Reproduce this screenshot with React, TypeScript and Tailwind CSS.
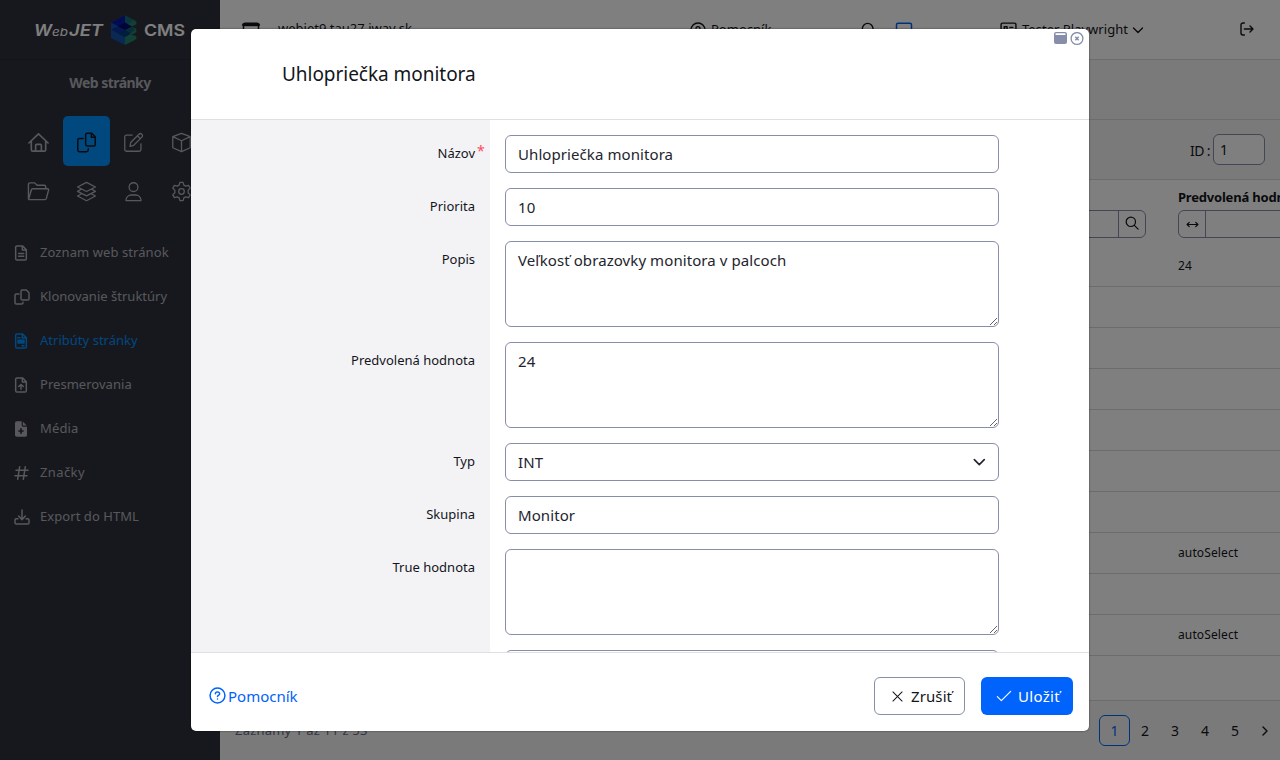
import React from "react";

type IconProps = { className?: string; sw?: number; size?: number; children?: React.ReactNode };

function Icon({ className = "", sw = 1.5, size = 24, children }: IconProps) {
  return (
    <svg
      width={size}
      height={size}
      viewBox="0 0 24 24"
      fill="none"
      stroke="currentColor"
      strokeWidth={sw}
      strokeLinecap="round"
      strokeLinejoin="round"
      className={"shrink-0 " + className}
    >
      {children}
    </svg>
  );
}

const home = (
  <>
    <path d="M2 12.500 12 3l10 9.500M4.500 11v8.500a1.500 1.500 0 0 0 1.500 1.500h12a1.500 1.500 0 0 0 1.500-1.500V11" />
    <path d="M9 21v-6a1 1 0 0 1 1-1h4a1 1 0 0 1 1 1v6" />
  </>
);
const copy = (
  <>
    <path d="M13 1.500h5l4 4v9a1.500 1.500 0 0 1-1.500 1.500h-7.500a2 2 0 0 1-2-2V3.500a2 2 0 0 1 2-2zM17.500 1.500V6h4.500" />
    <path d="M8 7.500H4a2 2 0 0 0-2 2v11a2 2 0 0 0 2 2h8a2 2 0 0 0 2-2V19" />
  </>
);
const copySmall = (
  <>
    <path d="M12.500 1.500h6l4 4v9a2 2 0 0 1-2 2h-8a2 2 0 0 1-2-2v-11a2 2 0 0 1 2-2z" />
    <path d="M7.500 7.500h-4a2 2 0 0 0-2 2v11a2 2 0 0 0 2 2h8a2 2 0 0 0 2-2V20" />
  </>
);
const edit = (
  <>
    <path d="M10.500 3.500H4a2 2 0 0 0-2 2V20a2 2 0 0 0 2 2h14.500a2 2 0 0 0 2-2V13.500" />
    <path d="m8 16.500.8-4.500L18.200 2.500a2.300 2.300 0 0 1 3.300 3.300l-9.200 9.400zM16.500 4.300l3.300 3.300" />
  </>
);
const cube = <path d="m12 1.500 10 3.800v12.700L12 22.500 2 18V5.300zM2 5.300 12 10l10-4.700M12 10v12.500" />;
const folder = (
  <>
    <path d="M1.500 19.500V4.500A1.500 1.500 0 0 1 3 3h5l2.500 2.500H18A1.500 1.500 0 0 1 19.500 7v2" />
    <path d="M1.700 19.800 4.500 10.500A1.500 1.500 0 0 1 6 9.200h15.500a1 1 0 0 1 1 1.300l-2.300 8.700a1.800 1.800 0 0 1-1.700 1.300H2.200" />
  </>
);
const stack = (
  <>
    <path d="M12 1.500 1.800 6.800 12 12l10.200-5.200z" />
    <path d="m6 9.500-4.200 2.300L12 17l10.200-5.200L18 9.500" />
    <path d="m6 14.800-4.200 2.300L12 22.500l10.200-5.400-4.200-2.300" />
  </>
);
const user = (
  <>
    <circle cx="12" cy="7" r="5" />
    <path d="M3.500 22.500v-1a6 6 0 0 1 6-5.500h5a6 6 0 0 1 6 5.500v1z" />
  </>
);
const gear = (
  <>
    <path d="M10.200 1.500h3.600l.9 3.200 2.200 1.200 3.200-.9 1.900 3.200-2.400 2.400v2.800l2.400 2.400-1.900 3.200-3.200-.9-2.200 1.200-.9 3.200h-3.600l-.9-3.200-2.200-1.200-3.200.9L2 15.800l2.400-2.400v-2.800L2 8.200 3.900 5l3.200.9 2.200-1.200z" />
    <circle cx="12" cy="12" r="3.200" />
  </>
);
const fileOutline = (
  <path d="M4.500 1.500h8.500l5.500 5.500v13.500a2 2 0 0 1-2 2h-12a2 2 0 0 1-2-2v-17a2 2 0 0 1 2-2zM12.500 2v5.500h5.500" />
);
const fileText = (
  <>
    {fileOutline}
    <path d="M7 12.800h7.500M7 17h7.500" />
  </>
);
const fileFilled = (
  <>
    {fileOutline}
    <path d="M5.500 7h3.500" />
    <rect x="6" y="11" width="9" height="4" fill="currentColor" />
    <path d="M12 19h3" />
  </>
);
const fileUp = (
  <>
    {fileOutline}
    <path d="M10.500 18.500V11.500M7 14.200l3.500-3 3.500 3" />
  </>
);
const filePlus = (
  <>
    <path
      fill="currentColor"
      stroke="none"
      fillRule="evenodd"
      d="M4 .5h7.500v6a2 2 0 0 0 2 2h6v12.500a2.500 2.500 0 0 1-2.500 2.500H4A2.500 2.500 0 0 1 1.500 21V3A2.500 2.500 0 0 1 4 .5zM9.200 11v2.700H6.500v2.600h2.700V19h2.600v-2.700h2.700v-2.600h-2.700V11z"
    />
    <path fill="currentColor" stroke="none" d="M13.200 .8 19 6.800h-5.800z" />
  </>
);
const hash = <path d="M3 8h18M1.500 16h18M8.500 2.500l-3 19M17 2.500l-3 19" />;
const download = (
  <>
    <path d="M12 1.500v14M7 10.500l5 5.500 5-5.500" />
    <path d="M6 14.500H3.500a2 2 0 0 0-2 2v4a2 2 0 0 0 2 2h17a2 2 0 0 0 2-2v-4a2 2 0 0 0-2-2H18" />
  </>
);
const help = (
  <>
    <circle cx="12" cy="12" r="10.500" />
    <path d="M9 9.500a3 2.500 0 1 1 4.700 2c-1.100.6-1.700.9-1.700 2M12 17v.1" />
  </>
);
const search = (
  <>
    <circle cx="10" cy="10" r="8" />
    <path d="m16 16 6.500 6.500" />
  </>
);

const topIcons = [home, copy, edit, cube, folder, stack, user, gear];

const menu = [
  { label: "Zoznam web stránok", icon: fileText, track: "tracking-[0.08px]" },
  { label: "Klonovanie štruktúry", icon: copySmall, track: "tracking-[0.01px]" },
  { label: "Atribúty stránky", icon: fileFilled, active: true, track: "tracking-[0.02px]" },
  { label: "Presmerovania", icon: fileUp, track: "tracking-[0.03px]" },
  { label: "Média", icon: filePlus, track: "tracking-[0.13px]" },
  { label: "Značky", icon: hash, track: "tracking-[0.4px]" },
  { label: "Export do HTML", icon: download, track: "tracking-[0.06px]" },
];

function Logo() {
  return (
    <svg width="150" height="32" viewBox="0 0 150 32" className="shrink-0">
      <g fill="#fff" fontFamily="Inter, sans-serif" fontWeight="600">
        <text x="-1" y="21.500" fontSize="16.500" fontStyle="italic" textLength="18" lengthAdjust="spacingAndGlyphs">W</text>
        <text x="17" y="21.500" fontSize="11" fontStyle="italic" textLength="16" lengthAdjust="spacingAndGlyphs" fontWeight="400">eb</text>
        <text x="34" y="21.500" fontSize="16.500" fontStyle="italic" textLength="34" lengthAdjust="spacingAndGlyphs">JET</text>
        <text x="109" y="21.500" fontSize="16.500" textLength="41" lengthAdjust="spacingAndGlyphs">CMS</text>
      </g>
      <path d="M76 8.500 90 1.500V31l-14-7z" fill="#1250a4" />
      <path d="m90 1.500 10 5q1.500 1 1.500 2.500t-1.500 2L96 13l4 1q1.500 1 1.500 2.500T100 19l-4 2 4 .5q1.500.8 1.500 2T100 26l-10 5z" fill="#23806a" />
      <path d="M76 8.500 90 1.500v14z" fill="#0618a4" />
      <path d="m90 1.500 9 4.500-9 6z" fill="#176878" />
      <path d="m90 8.500 7 4-7 4-7-4z" fill="#000a70" />
      <path d="M76 15.500 83 12.500l7 3.500v7z" fill="#0a30a0" />
      <path d="m90 16 7-3 3 3-10 7z" fill="#105a70" />
      <path d="m90 16 6 3.500-6 3.500-7-3.500z" fill="#063a78" />
    </svg>
  );
}

function Sidebar() {
  return (
    <aside className="flex h-full w-[220px] shrink-0 flex-col bg-[#2f313b] text-[#b0b1b8]">
      <div className="flex h-[60px] shrink-0 items-center border-b border-[#272832] pl-[35px]">
        <Logo />
      </div>
      <div className="flex h-[46px] items-center justify-center pb-[2px] text-[14px] font-bold tracking-[-0.55px]">Web stránky</div>
      <div className="mt-[10px] grid w-[192px] grid-cols-[47px_47px_47px_47px] gap-x-[0.6px] pl-[15px]">
        {topIcons.map((icon, i) => (
          <div
            key={i}
            className={
              "flex h-[50px] items-center justify-center rounded-[5px] " +
              (i === 1 ? "bg-[#0090fb] text-[#15161c] " : "") +
              (i > 3 ? "" : "pt-[2px]")
            }
          >
            <Icon size={i === 0 || i === 4 ? 23 : 21} sw={i === 0 || i === 1 ? 1.7 : 1.45}>{icon}</Icon>
          </div>
        ))}
      </div>
      <nav className="mt-[14px] flex flex-col">
        {menu.map((m) => (
          <div
            key={m.label}
            className={"flex h-[44px] items-center gap-[10px] pt-[2px] pl-[14px] text-[13px] " + m.track + (m.active ? " text-[#0090fb]" : "")}
          >
            <Icon size={16} sw={2.2}>{m.icon}</Icon>
            <span>{m.label}</span>
          </div>
        ))}
      </nav>
    </aside>
  );
}

const rows = ["24", "", "", "", "", "", "", "autoSelect", "", "autoSelect", ""];

function Main() {
  return (
    <main className="flex h-full min-w-0 flex-1 flex-col overflow-hidden bg-white text-[#13151b]">
      <header className="flex h-[60px] shrink-0 items-center border-b border-[#d8d8dc] text-[13px]">
        <Icon size={18} sw={2} className="ml-[22px]">
          <rect x="2" y="3" width="20" height="18" rx="2" />
          <path d="M2 5h20" strokeWidth="4" />
        </Icon>
        <span className="-mt-[2px] ml-[18px] w-[413px] text-[13px]">webjet9.tau27.iway.sk</span>
        <Icon size={16} sw={2.1} className="-ml-px">{help}</Icon>
        <span className="ml-[5px] w-[150px]">Pomocník</span>
        <Icon size={16} sw={2.1}>{search}</Icon>
        <Icon size={18} sw={2} className="ml-[18px] text-[#0063fb]">
          <rect x="2" y="3" width="20" height="14" rx="2" />
          <path d="M8 21h8" />
        </Icon>
        <Icon size={17} sw={2} className="ml-[87px]">
          <rect x="1.500" y="3" width="21" height="18" rx="2" />
          <rect x="6" y="8" width="4" height="4" />
          <path d="M14 9h4M14 13h4M6 16h5" />
        </Icon>
        <span className="ml-[5px] tracking-[0.03px]">Tester Playwright</span>
        <Icon size={12} sw={2.8} className="ml-[4px]"><path d="m3 8 9 9 9-9" /></Icon>
        <Icon size={16} sw={2.1} className="mr-[25px] ml-auto -mt-[2px]">
          <path d="M8 3H6a3 3 0 0 0-3 3v12a3 3 0 0 0 3 3h2M8 12h13M16.500 7.500 21 12l-4.500 4.500" />
        </Icon>
      </header>
      <div className="h-[60px] shrink-0 border-b border-[#d8d8dc] bg-[#f5f5f6]" />
      <div className="flex h-[60px] shrink-0 items-center justify-end gap-[3px] border-b border-[#d8d8dc] bg-[#f5f5f6] pr-[15px] text-[14px]">
        <span className="pt-px tracking-[-0.6px]">ID :</span>
        <div className="flex h-[31px] w-[52px] items-center rounded-[6px] border border-[#868eaa] bg-white pl-[6px]">1</div>
      </div>
      <div className="flex h-[66px] shrink-0 justify-end">
        <div className="mt-[30px] mr-[32px] flex h-[28px] w-[200px] rounded-[6px] border border-[#868eaa]">
          <div className="flex-1" />
          <div className="flex w-[27px] items-center justify-center border-l border-[#868eaa] pb-[2px]">
            <Icon size={14} sw={2.1}>{search}</Icon>
          </div>
        </div>
        <div className="w-[102px] overflow-hidden pt-[9px]">
          <div className="h-[21px] text-[13px] leading-[17px] font-bold whitespace-nowrap tracking-[-0.2px]">Predvolená hodnota</div>
          <div className="flex h-[28px] w-[200px] rounded-[6px] border border-[#868eaa]">
            <div className="flex w-[27px] items-center justify-center border-r border-[#868eaa]">
              <Icon size={13} sw={2.2}><path d="M2 12h20M6 8l-4 4 4 4M18 8l4 4-4 4" /></Icon>
            </div>
          </div>
        </div>
      </div>
      <div className="flex shrink-0 flex-col">
        {rows.map((r, i) => (
          <div
            key={i}
            className={"flex items-start border-b border-[#d8d8dc] pt-[10px] pl-[958px] text-[12px] leading-[19px] tracking-[0.12px] " + (i === 10 ? "h-[45px]" : "h-[41px]")}
          >
            {r}
          </div>
        ))}
      </div>
      <footer className="flex flex-1 items-center bg-[#f5f5f6] pl-[15px] text-[14px]">
        <span className="text-[13px] tracking-[0.2px] text-[#666d85]">Záznamy 1 až 11 z 53</span>
        <div className="mr-0 ml-auto flex items-center">
          <div className="flex h-[31px] w-[31px] items-center justify-center rounded-[6px] border border-[#0063fb] text-[#0063fb]">1</div>
          {["2", "3", "4", "5"].map((n) => (
            <div key={n} className="flex w-[30px] justify-center">{n}</div>
          ))}
          <div className="flex w-[30px] justify-center">
            <Icon size={12} sw={2.8}><path d="m8 4 8 8-8 8" /></Icon>
          </div>
        </div>
      </footer>
    </main>
  );
}

type Field = { label: string; value: string; kind: "input" | "area" | "select"; required?: boolean };

const fields: Field[] = [
  { label: "Názov", value: "Uhlopriečka monitora", kind: "input", required: true },
  { label: "Priorita", value: "10", kind: "input" },
  { label: "Popis", value: "Veľkosť obrazovky monitora v palcoch", kind: "area" },
  { label: "Predvolená hodnota", value: "24", kind: "area" },
  { label: "Typ", value: "INT", kind: "select" },
  { label: "Skupina", value: "Monitor", kind: "input" },
  { label: "True hodnota", value: "", kind: "area" },
  { label: "", value: "", kind: "area" },
];

function FieldRow({ f }: { f: Field }) {
  return (
    <div className="flex">
      <div className="w-[299px] shrink-0 pt-[8px] pr-[15px] text-right text-[13px] leading-[20px] text-[#13151b]">
        <span className="relative">
          {f.label}
          {f.required && <span className="absolute -top-[3px] left-full ml-[2px] text-[14px] text-[#ff4b58]">*</span>}
        </span>
      </div>
      <div className="ml-[15px] w-[494px] text-[15px] leading-[24px] tracking-[0.08px] text-[#22252e]">
        {f.kind === "area" ? (
          <textarea
            defaultValue={f.value}
            className="block h-[86px] w-full resize rounded-[6px] border border-[#868eaa] bg-white px-[12px] py-[6px] tracking-[0.08px]"
          />
        ) : (
          <div className="flex h-[38px] items-center justify-between rounded-[6px] border border-[#868eaa] bg-white px-[12px]">
            <span>{f.value}</span>
            {f.kind === "select" && (
              <Icon size={14} sw={2.8} className="-mt-px"><path d="m4 8 8.500 8.500L21 8" /></Icon>
            )}
          </div>
        )}
      </div>
    </div>
  );
}

function Modal() {
  return (
    <section className="absolute top-[29px] left-[191px] flex h-[702px] w-[898px] flex-col overflow-hidden rounded-[5px] bg-white shadow-[0_0_2px_rgba(0,0,0,0.6)]">
      <div className="flex h-[91px] shrink-0 items-start justify-between border-b border-[#dfe0e4] pl-[91px]">
        <h1 className="pt-[30px] text-[19px] leading-[30px] tracking-[-0.04px] text-[#13151b]">Uhlopriečka monitora</h1>
        <div className="flex items-center gap-[2px] pt-[2px] pr-[5px] text-[#868eaa]">
          <svg width="15" height="15" viewBox="0 0 15 15">
            <rect x="1" y="1" width="13" height="12" rx="2" fill="currentColor" />
            <rect x="2.500" y="2.300" width="10" height="1.700" rx=".5" fill="#fff" />
          </svg>
          <svg width="14" height="14" viewBox="0 0 14 14" fill="none" stroke="currentColor">
            <circle cx="7" cy="6.500" r="5.900" strokeWidth="1.300" />
            <path d="m5.300 4.800 3.400 3.400m0-3.400L5.300 8.200" strokeWidth="1.500" />
          </svg>
        </div>
      </div>
      <div className="flex min-h-0 flex-1 flex-col gap-[15px] overflow-hidden bg-[linear-gradient(to_right,#f3f3f6_299px,#fff_299px)] pt-[15px]">
        {fields.map((f, i) => (
          <FieldRow key={i} f={f} />
        ))}
      </div>
      <div className="flex h-[79px] shrink-0 items-center border-t border-[#dfe0e4] px-[16px] pt-[8px] pb-0 text-[15px]">
        <div className="flex items-center gap-[2px] pl-[2px] text-[#0063fb]">
          <Icon size={17} sw={2.1} className="-mt-px">{help}</Icon>
          <span>Pomocník</span>
        </div>
        <button className="ml-auto flex h-[38px] w-[91px] items-center rounded-[6px] border border-[#868eaa] pl-[17px] text-[#13151b]">
          <Icon size={11} sw={2.2}><path d="m2 2 20 20M22 2 2 22" /></Icon>
          <span className="ml-[8px] tracking-[0.1px]">Zrušiť</span>
        </button>
        <button className="ml-[16px] flex h-[38px] w-[92px] items-center rounded-[6px] bg-[#0063fb] pl-[15px] text-white">
          <Icon size={16} sw={1.7}><path d="m2 13 6 6L22 5" /></Icon>
          <span className="ml-[6px] tracking-[0.3px]">Uložiť</span>
        </button>
      </div>
    </section>
  );
}

export default function App() {
  return (
    <div className="relative flex h-[760px] w-[1280px] overflow-hidden font-['Noto_Sans',sans-serif]">
      <Sidebar />
      <Main />
      <div className="absolute inset-0 bg-black/50" />
      <Modal />
    </div>
  );
}
